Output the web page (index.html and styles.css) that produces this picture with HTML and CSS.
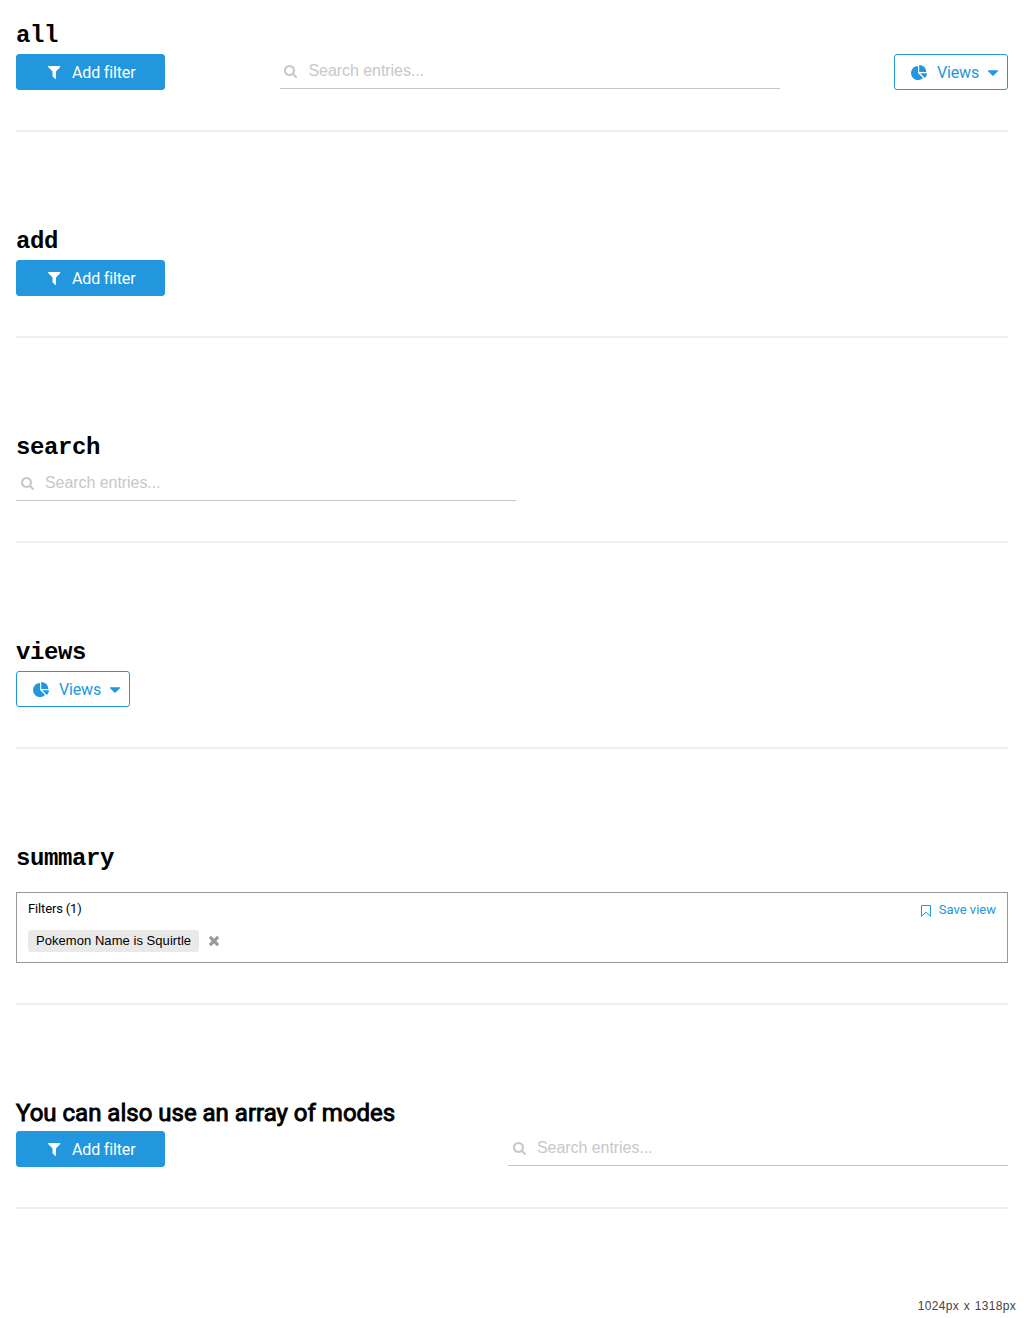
FILE: index.html
```
<!DOCTYPE html>
<html lang="en">
<head>
<meta charset="utf-8">
<title>Filters</title>
<link rel="stylesheet" href="styles.css">
</head>
<body>
<svg width="0" height="0" class="sprite" aria-hidden="true">
  <symbol id="filter" viewBox="0 0 1408 1408" preserveAspectRatio="none"><path d="M1403 39q17 41-14 70L896 602v742q0 42-39 59-13 5-25 5-27 0-45-19l-256-256q-19-19-19-45V602L19 109Q-12 80 5 39 22 0 64 0h1280q42 0 59 39z"/></symbol>
  <symbol id="search" viewBox="0 0 1664 1664"><path d="M1152 704q0-185-131.500-316.500T704 256 387.500 387.500 256 704t131.500 316.500T704 1152t316.500-131.500T1152 704zm512 832q0 52-38 90t-90 38q-54 0-90-38l-343-342q-179 124-399 124-143 0-273.500-55.500t-225-150-150-225T0 704t55.500-273.500 150-225 225-150T704 0t273.500 55.500 225 150 150 225T1408 704q0 220-124 399l343 343q37 37 37 90z"/></symbol>
  <symbol id="pie" viewBox="0 0 16 15"><path d="M7 8l5.100 5.100A7.100 7.100 0 1 1 7 .900zM8.200 7V0a7.200 7 0 0 1 7.200 7zM9.200 8.200H16a7 7 0 0 1-2.100 4.800z"/></symbol>
  <symbol id="caret" viewBox="0 0 1024 576"><path d="M1024 64q0 26-19 45L557 557q-19 19-45 19t-45-19L19 109Q0 90 0 64t19-45T64 0h896q26 0 45 19t19 45z"/></symbol>
  <symbol id="close" viewBox="0 0 1188 1188"><path d="M1188 956q0 40-28 68l-136 136q-28 28-68 28t-68-28L594 866l-294 294q-28 28-68 28t-68-28L28 1024Q0 996 0 956t28-68l294-294L28 300Q0 272 0 232t28-68L164 28q28-28 68-28t68 28l294 294L888 28q28-28 68-28t68 28l136 136q28 28 28 68t-28 68L866 594l294 294q28 28 28 68z"/></symbol>
</svg>
<main>
  <section class="story">
    <h2>all</h2>
    <div class="controls">
      <button class="btn add"><svg class="i-filter"><use href="#filter"/></svg><span>Add filter</span></button>
      <label class="search"><svg><use href="#search"/></svg><input placeholder="Search entries..."></label>
      <button class="btn views"><svg class="i-pie"><use href="#pie"/></svg><span>Views</span><svg class="i-caret"><use href="#caret"/></svg></button>
    </div>
  </section>
  <section class="story">
    <h2>add</h2>
    <div class="controls">
      <button class="btn add"><svg class="i-filter"><use href="#filter"/></svg><span>Add filter</span></button>
    </div>
  </section>
  <section class="story">
    <h2>search</h2>
    <div class="controls">
      <label class="search"><svg><use href="#search"/></svg><input placeholder="Search entries..."></label>
    </div>
  </section>
  <section class="story">
    <h2>views</h2>
    <div class="controls">
      <button class="btn views"><svg class="i-pie"><use href="#pie"/></svg><span>Views</span><svg class="i-caret"><use href="#caret"/></svg></button>
    </div>
  </section>
  <section class="story">
    <h2>summary</h2>
    <div class="summary">
      <div class="summary-head">
        <span class="count">Filters (1)</span>
        <button class="save"><svg viewBox="0 0 10 12"><path d="M.5.500h9v10.700L5 7.300.500 11.200z"/></svg>Save view</button>
      </div>
      <div class="rule">
        <span class="tag">Pokemon Name is Squirtle</span>
        <button class="remove" aria-label="Remove"><svg><use href="#close"/></svg></button>
      </div>
    </div>
  </section>
  <section class="story">
    <h2 class="plain">You can also use an array of modes</h2>
    <div class="controls">
      <button class="btn add"><svg class="i-filter"><use href="#filter"/></svg><span>Add filter</span></button>
      <label class="search"><svg><use href="#search"/></svg><input placeholder="Search entries..."></label>
    </div>
  </section>
</main>
<footer class="size">1024px x 1318px</footer>
</body>
</html>
```
FILE: styles.css
```
* { box-sizing: border-box; }
body {
  margin: 0;
  height: 1318px;
  padding: 16px 16px 0;
  display: flex;
  flex-direction: column;
  background: #fff;
  color: #000;
  font-family: Roboto, sans-serif;
  overflow: hidden;
}
.sprite { display: block; position: absolute; }
svg { display: block; flex: none; fill: currentColor; }
button { font: inherit; cursor: pointer; }
.story {
  padding-bottom: 40px;
  border-bottom: 2px solid #eee;
  margin-bottom: 90px;
}
.story:last-child { margin-bottom: 0; }
h2 {
  margin: 0;
  height: 38px;
  font: bold 24px/40px "Liberation Mono", monospace;
  letter-spacing: -0.4px;
}
h2.plain {
  height: 36px;
  font: 400 24px/36px Roboto, sans-serif;
  letter-spacing: 0;
  -webkit-text-stroke: 0.9px #000;
}
.controls {
  display: flex;
  justify-content: space-between;
  align-items: flex-start;
}
.btn {
  height: 36px;
  display: flex;
  align-items: center;
  border: 1px solid #2297de;
  border-radius: 3px;
  font-size: 16px;
  line-height: 34px;
  letter-spacing: -0.15px;
}
.btn span { padding-top: 2px; }
.add { width: 149px; padding: 0 0 0 31px; background: #2297de; color: #fff; }
.views { width: 114px; padding: 0 0 0 16px; background: #fff; color: #2297de; }
.i-filter { width: 12.5px; height: 13px; margin-right: 11.5px; }
.i-pie { width: 16px; height: 15px; margin-right: 10px; overflow: visible; }
.i-caret { width: 10px; height: 6px; margin: 2px 0 0 9px; }
.search {
  width: 500px;
  height: 35px;
  display: flex;
  align-items: center;
  padding-left: 4.5px;
  border-bottom: 1px solid #c4c4c4;
  color: #c6c8c9;
}
.search svg { width: 13px; height: 13px; }
.search input {
  flex: 1;
  min-width: 0;
  height: 34px;
  padding: 0 0 0 11.5px;
  border: 0;
  outline: 0;
  background: none;
  font: 16px "Liberation Sans", Arial, sans-serif;
  letter-spacing: -0.06px;
}
.search input::placeholder { color: #c6c8c9; }
.summary {
  height: 71px;
  margin-top: 15px;
  padding: 7px 11px 0;
  border: 1px solid #999;
  font-size: 13px;
}
.summary-head {
  display: flex;
  justify-content: space-between;
  height: 30px;
  line-height: 18px;
}
.count { letter-spacing: -0.15px; }
.save {
  display: flex;
  align-items: center;
  gap: 8px;
  height: 20px;
  padding: 0;
  border: 0;
  background: none;
  color: #2297de;
}
.save svg { width: 10px; height: 12px; fill: none; stroke: currentColor; stroke-width: 1; margin-top: 1px; }
.rule { display: flex; align-items: center; gap: 10px; }
.tag {
  height: 22px;
  padding: 0 8px;
  border-radius: 3px;
  background: #e9e9e9;
  font: 13px/22px "Liberation Sans", Arial, sans-serif;
  letter-spacing: 0.05px;
}
.remove { padding: 0; border: 0; background: none; color: #999; }
.remove svg { width: 10px; height: 10px; }
.size {
  margin: auto -8px 4px auto;
  font: 12px/16px "Liberation Sans", Arial, sans-serif;
  letter-spacing: 0.32px;
  word-spacing: 1px;
  color: #444;
}
```
